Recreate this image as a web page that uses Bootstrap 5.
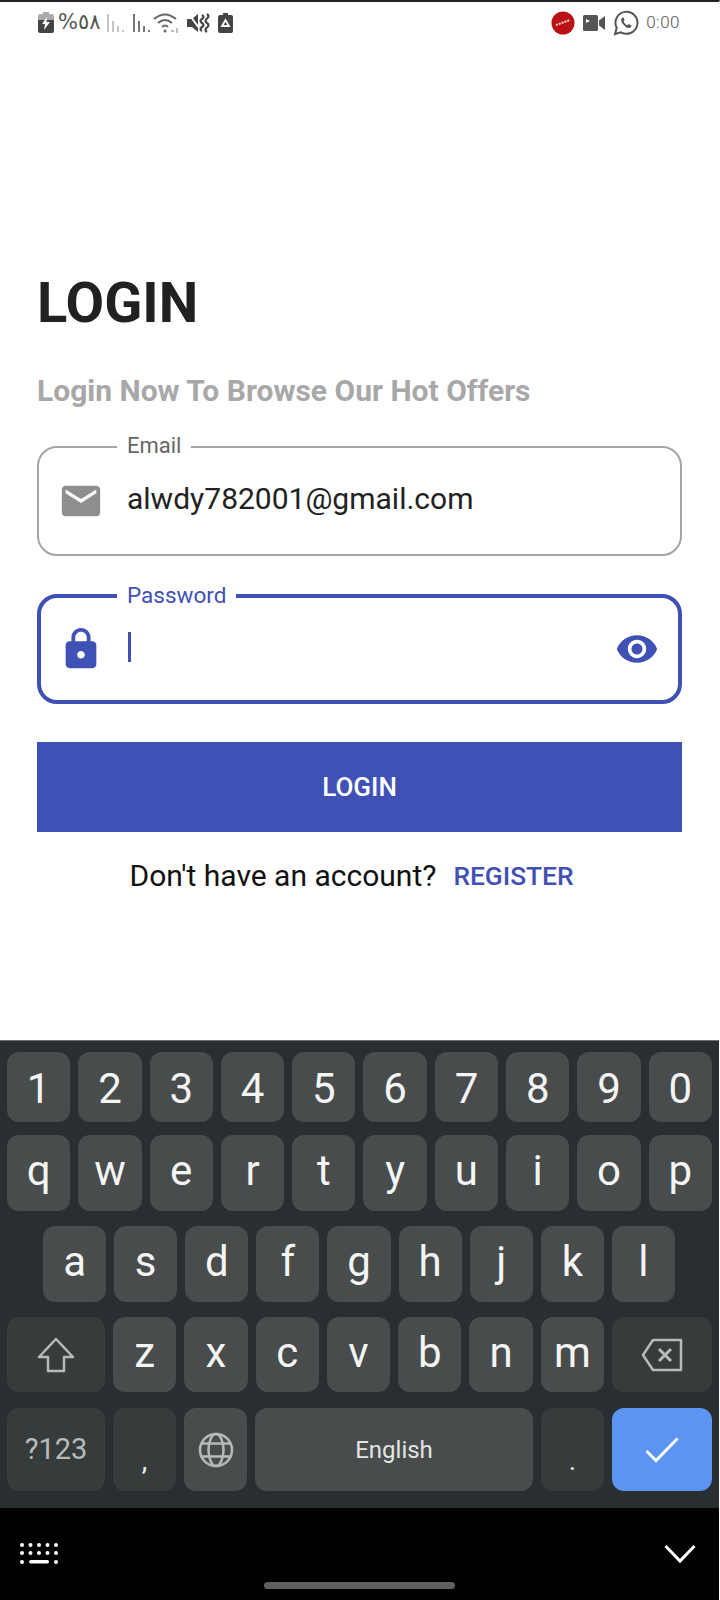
<!DOCTYPE html>
<html lang="en">
<head>
    <meta charset="UTF-8">
    <title>Login</title>
    <link href="https://cdn.jsdelivr.net/npm/bootstrap@5.3.2/dist/css/bootstrap.min.css" rel="stylesheet">
    <style>
        body { width: 720px; height: 1600px; overflow: hidden; font-family: Roboto, sans-serif; background: #fff; }
        .phone { height: 1600px; border-top: 2px solid #222; border-right: 1px solid #fff; }

        /* status bar */
        .status-bar { height: 44px; padding: 0 39px 3px 38px; color: #555; }
        .status-bar svg { display: block; flex: none; }
        .status-pct { font-size: 21px; line-height: 1; margin: 0 2px 0 4px; unicode-bidi: bidi-override; direction: ltr; font-family: "DejaVu Sans", sans-serif; }
        .status-time { font-size: 17px; font-weight: 300; letter-spacing: .5px; color: #555; margin-left: 7px; }
        .status-wifi { margin-left: 2px; }
        .status-mute { margin-left: 7px; }

        /* login form */
        .login-main { height: 994px; padding: 227px 37px 0; }
        .login-title { font-size: 56px; line-height: 60px; font-weight: 700; color: #212121; margin: 0 0 40px; }
        .login-sub { font-size: 30px; line-height: 36px; font-weight: 700; color: #a8a8a8; margin: 0 0 37px; }
        .field-box { height: 110px; border: 2px solid #a5a5a5; border-radius: 20px; margin-bottom: 38px; padding: 0 20px 0 19px; }
        .field-box.is-active { border: 4px solid #3f51b5; padding: 0 19px 0 17px; }
        .field-label { position: absolute; top: -15px; left: 78px; padding: 0 10px; background: #fff; font-size: 22px; line-height: 26px; color: #666; }
        .is-active .field-label { color: #3f51b5; top: -16px; left: 76px; font-size: 22.500px; }
        .field-value { font-size: 30px; color: #222; margin-left: 23px; line-height: 40px; margin-top: -4px; }
        .field-caret { width: 3px; height: 30px; background: #3f51b5; margin-left: 24px; margin-top: -4px; }
        .btn-login { height: 90px; border-radius: 0; border: 0; background: #3f51b5; color: #fff; font-size: 26px; font-weight: 500; }
        .btn-login:hover { background: #3f51b5; color: #fff; }
        .register-row { margin-top: 25px; line-height: 38px; padding-right: 16px; }
        .register-ask { font-size: 30px; color: #111; }
        .register-link { font-size: 26.300px; font-weight: 500; color: #3f51b5; text-decoration: none; margin-left: 17px; }

        /* keyboard */
        .kb { height: 468px; background: #292e30; border-top: 1px solid #6d7071; padding: 11px 7px 0 7px; }
        .kb-row { gap: 8px; }
        .kb-row-digits { height: 70px; margin-bottom: 13px; }
        .kb-row-digits .kb-key { padding-top: 3px; }
        .kb-row-a { height: 76px; margin-bottom: 15px; }
        .kb-row-home { padding-left: 36px; padding-right: 37px; }
        .kb-row-z { height: 75px; margin-bottom: 16px; }
        .kb-row-fn { height: 83px; }
        .kb-key { flex: 1 1 0; min-width: 0; background: #484c4c; border-radius: 12px; color: #f4f4f4; font-size: 42px; line-height: 1; }
        .kb-letter { padding-bottom: 4px; }
        .kb-fn { background: #363b3c; }
        .kb-wide { flex: none; width: 98px; }
        .kb-back { flex: none; width: 100px; }
        .kb-space { flex: none; width: 278px; font-size: 24px; color: #e4e4e4; }
        .kb-sym { font-size: 29px; color: #b8baba; }
        .kb-punct { align-items: flex-end !important; font-size: 28px; padding-bottom: 16px; color: #eee; }
        .kb-ok { background: #5b94f2; }

        /* nav bar */
        .nav-strip { height: 92px; background: #000; }
        .nav-pill { position: absolute; left: 264px; top: 74px; width: 191px; height: 7px; border-radius: 4px; background: #5f5f5f; }
        .nav-kbd { position: absolute; left: 20px; top: 35px; }
        .nav-down { position: absolute; left: 664px; top: 36px; }
    </style>
</head>
<body>
<div class="phone d-flex flex-column">

    <div class="status-bar d-flex align-items-center">
        <svg width="16" height="21" viewBox="0 0 16 21"><path d="M5 0h6v2h3a2 2 0 0 1 2 2v4H0V4a2 2 0 0 1 2-2h3z" fill="#aaa"/><path d="M0 8h16v11a2 2 0 0 1-2 2H2a2 2 0 0 1-2-2z" fill="#444"/><path d="M9 5 4 12h3l-1 6 6-8H8.500z" fill="#fff"/></svg>
        <span class="status-pct">%٥٨</span>
        <svg class="ms-1" width="18" height="20" viewBox="0 0 18 20" fill="#c4c4c4"><rect x="0" y="1" width="2" height="18"/><rect x="5" y="8" width="2" height="11"/><rect x="10" y="13" width="2" height="6"/><rect x="15" y="17" width="2" height="2"/></svg>
        <svg class="ms-2" width="18" height="20" viewBox="0 0 18 20" fill="#777"><rect x="0" y="1" width="2" height="18"/><rect x="5" y="8" width="2" height="11"/><rect x="10" y="13" width="2" height="6"/><rect x="15" y="17" width="2" height="2"/></svg>
        <svg class="status-wifi" width="27" height="22" viewBox="0 0 27 22" fill="none" stroke="#666" stroke-width="2"><path d="M1 7q11-9 22 0M5 11q7-6 14 0M9 15q3-3 6 0"/><circle cx="12" cy="19" r="1.500" fill="#666" stroke="none"/><path d="M18 19h3M24 21v-5" stroke="#aaa" stroke-width="1.500"/></svg>
        <svg class="status-mute" width="23" height="22" viewBox="0 0 23 22" fill="#444"><path d="M0 7h5l6-5v18l-6-5H0z"/><path d="M1 1 15 20" stroke="#fff" stroke-width="2"/><path d="M15 3q3 2 0 4t0 4 0 4 0 4M20 2q3 2 0 4.500t0 4.500 0 4.500 0 4.500" fill="none" stroke="#444" stroke-width="2.200"/></svg>
        <svg class="ms-2" width="15" height="20" viewBox="0 0 15 20"><path d="M5 0h5v2h3a2 2 0 0 1 2 2v14a2 2 0 0 1-2 2H2a2 2 0 0 1-2-2V4a2 2 0 0 1 2-2h3z" fill="#444"/><path d="M7.500 7 11 13H4z" fill="none" stroke="#fff" stroke-width="1.800"/></svg>

        <div class="ms-auto d-flex align-items-center">
            <svg width="24" height="24" viewBox="0 0 24 24"><circle cx="12" cy="12" r="11.500" fill="#bb1114"/><path d="M5 14 19 9" stroke="#f5d0d0" stroke-width="2" stroke-dasharray="2 1"/></svg>
            <svg class="ms-2" width="22" height="16" viewBox="0 0 22 16" fill="#555"><rect x="0" y="0" width="15" height="16" rx="1.500"/><path d="M16 5.500 22 1v14l-6-4.500z"/><path d="M3 4 7 6 3 8z" fill="#fff"/></svg>
            <svg class="ms-2" width="26" height="26" viewBox="0 0 26 26" fill="none"><path d="M2 24l1.700-6.200A11 11 0 1 1 8 22.300z" stroke="#555" stroke-width="2"/><path d="M9.500 7.500c-1.500 1-2 3 0 6s4.500 5 7 4.500c1.500-.4 2-1.500 2-2.500l-3-1.500-1.200 1.300c-1.500-.6-3-2.200-3.700-3.800l1-1.200L10.500 7.500z" fill="#555"/></svg>
            <span class="status-time">0:00</span>
        </div>
    </div>

    <main class="login-main">
        <h1 class="login-title">LOGIN</h1>
        <p class="login-sub">Login Now To Browse Our Hot Offers</p>

        <div class="field-box position-relative d-flex align-items-center">
            <span class="field-label">Email</span>
            <svg width="46" height="46" viewBox="0 0 24 24" fill="#8e8f8c"><path d="M20 4H4c-1.100 0-2 .9-2 2v12c0 1.100.9 2 2 2h16c1.100 0 2-.9 2-2V6c0-1.100-.9-2-2-2zm0 4l-8 5-8-5V6l8 5 8-5v2z"/></svg>
            <span class="field-value">alwdy782001@gmail.com</span>
        </div>

        <div class="field-box is-active position-relative d-flex align-items-center">
            <span class="field-label">Password</span>
            <svg width="46" height="46" viewBox="0 0 24 24" fill="#3f51b5"><path d="M18 8h-1V6c0-2.760-2.240-5-5-5S7 3.240 7 6v2H6c-1.100 0-2 .9-2 2v10c0 1.100.9 2 2 2h12c1.100 0 2-.9 2-2V10c0-1.100-.9-2-2-2zm-6 9c-1.100 0-2-.9-2-2s.9-2 2-2 2 .9 2 2-.9 2-2 2zM9 8V6c0-1.660 1.340-3 3-3s3 1.340 3 3v2H9z"/></svg>
            <span class="field-caret"></span>
            <svg class="ms-auto" width="44" height="44" viewBox="0 0 24 24" fill="#3f51b5"><path d="M12 4.500C7 4.500 2.730 7.610 1 12c1.730 4.390 6 7.500 11 7.500s9.270-3.110 11-7.500c-1.730-4.390-6-7.500-11-7.500zM12 17c-2.760 0-5-2.240-5-5s2.240-5 5-5 5 2.240 5 5-2.240 5-5 5zm0-8c-1.660 0-3 1.340-3 3s1.340 3 3 3 3-1.340 3-3-1.340-3-3-3z"/></svg>
        </div>

        <button class="btn btn-login w-100" type="button">LOGIN</button>

        <div class="register-row d-flex justify-content-center align-items-center">
            <span class="register-ask">Don't have an account?</span>
            <a class="register-link" href="#">REGISTER</a>
        </div>
    </main>

    <div class="kb">
        <div class="kb-row kb-row-digits d-flex" id="rowDigits"></div>
        <div class="kb-row kb-row-a d-flex" id="rowQ"></div>
        <div class="kb-row kb-row-a kb-row-home d-flex" id="rowA"></div>
        <div class="kb-row kb-row-z d-flex">
            <div class="kb-key kb-fn kb-wide d-flex align-items-center justify-content-center">
                <svg width="38" height="36" viewBox="0 0 38 36" fill="none" stroke="#b8baba" stroke-width="2.500"><path d="M19 2 2 20h9v14h16V20h9z" stroke-linejoin="round"/></svg>
            </div>
            <div id="rowZ" class="d-flex flex-grow-1 kb-row"></div>
            <div class="kb-key kb-fn kb-back d-flex align-items-center justify-content-center">
                <svg width="42" height="34" viewBox="0 0 42 34" fill="none" stroke="#b8baba" stroke-width="2.500"><path d="M12 2h28v30H12L2 17z" stroke-linejoin="round"/><path d="M18 11l12 12M30 11 18 23" stroke-width="3"/></svg>
            </div>
        </div>
        <div class="kb-row kb-row-fn d-flex">
            <div class="kb-key kb-fn kb-wide kb-sym d-flex align-items-center justify-content-center">?123</div>
            <div class="kb-key kb-fn kb-punct d-flex justify-content-center">,</div>
            <div class="kb-key d-flex align-items-center justify-content-center">
                <svg width="36" height="36" viewBox="0 0 36 36" fill="none" stroke="#b8baba" stroke-width="2.500"><circle cx="18" cy="18" r="16"/><ellipse cx="18" cy="18" rx="7.500" ry="16"/><path d="M4 11.500h28M4 24.500h28"/></svg>
            </div>
            <div class="kb-key kb-space d-flex align-items-center justify-content-center">English</div>
            <div class="kb-key kb-fn kb-punct d-flex justify-content-center">.</div>
            <div class="kb-key kb-ok kb-back d-flex align-items-center justify-content-center">
                <svg width="34" height="26" viewBox="0 0 34 26" fill="none" stroke="#fff" stroke-width="3"><path d="M1.500 14 11 23.500 32.500 1.500"/></svg>
            </div>
        </div>
    </div>

    <div class="nav-strip position-relative">
        <svg class="nav-kbd" width="38" height="22" viewBox="0 0 38 22" fill="#fff"><g id="dots"></g><rect x="9" y="17" width="20" height="3.500" rx="1.700"/><circle cx="2" cy="19" r="2"/><circle cx="36" cy="19" r="2"/></svg>
        <svg class="nav-down" width="32" height="20" viewBox="0 0 32 20" fill="none" stroke="#fff" stroke-width="3"><path d="M1.500 2 16 17 30.500 2"/></svg>
        <div class="nav-pill"></div>
    </div>
</div>

<script>
    function addKeys(id, chars, cls) {
        let row = document.querySelector(id);
        for (let c of chars) {
            let key = document.createElement("div");
            key.className = "kb-key d-flex align-items-center justify-content-center " + cls;
            key.innerText = c;
            row.appendChild(key);
        }
    }

    addKeys("#rowDigits", "1234567890", "");
    addKeys("#rowQ", "qwertyuiop", "kb-letter");
    addKeys("#rowA", "asdfghjkl", "kb-letter");
    addKeys("#rowZ", "zxcvbnm", "kb-letter");

    // keyboard glyph in the nav bar: two rows of dots
    let dots = "";
    for (let y of [2, 10]) {
        for (let i = 0; i < 5; i++) {
            dots += `<circle cx="${2 + i * 8.500}" cy="${y}" r="2"/>`;
        }
    }
    document.querySelector("#dots").innerHTML = dots;
</script>
<script src="https://cdn.jsdelivr.net/npm/bootstrap@5.3.2/dist/js/bootstrap.bundle.min.js"></script>
</body>
</html>
